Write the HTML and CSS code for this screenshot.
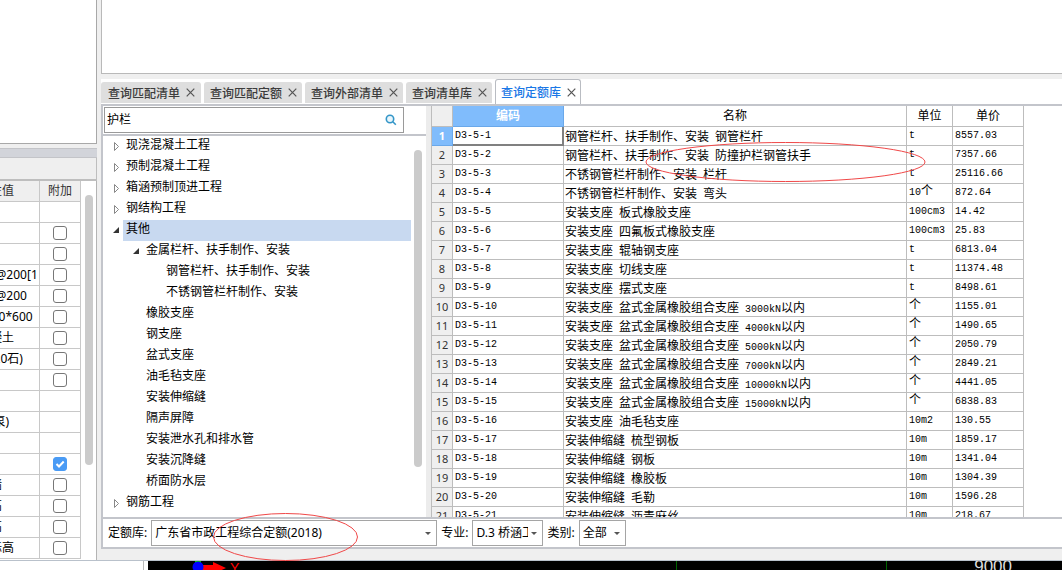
FILE: index.html
```html
<!DOCTYPE html>
<html lang="zh-CN">
<head>
<meta charset="utf-8">
<title>查询定额库</title>
<link rel="stylesheet" href="styles.css">
</head>
<body>
<main class="workspace">
  <aside class="props">
    <div class="props-view"></div>
    <div class="props-title"></div>
    <div class="props-tools"></div>
    <div class="props-body">
      <div class="props-clip">
      <table class="props-table">
        <thead><tr><th>属性值</th><th class="tick">附加</th></tr></thead>
        <tbody>
          <tr><td></td><td class="tick"></td></tr>
          <tr><td></td><td class="tick"><input type="checkbox" aria-label="附加"></td></tr>
          <tr><td></td><td class="tick"><input type="checkbox" aria-label="附加"></td></tr>
          <tr><td>C 8@200[1</td><td class="tick"><input type="checkbox" aria-label="附加"></td></tr>
          <tr><td>C 8@200</td><td class="tick"><input type="checkbox" aria-label="附加"></td></tr>
          <tr><td>1000*600</td><td class="tick"><input type="checkbox" aria-label="附加"></td></tr>
          <tr><td>混凝土</td><td class="tick"><input type="checkbox" aria-label="附加"></td></tr>
          <tr><td>(砾20石)</td><td class="tick"><input type="checkbox" aria-label="附加"></td></tr>
          <tr><td></td><td class="tick"><input type="checkbox" aria-label="附加"></td></tr>
          <tr><td></td><td class="tick"></td></tr>
          <tr><td>(水泵)</td><td class="tick"></td></tr>
          <tr><td></td><td class="tick"></td></tr>
          <tr><td></td><td class="tick"><input type="checkbox" aria-label="附加" checked></td></tr>
          <tr><td>直墙</td><td class="tick"><input type="checkbox" aria-label="附加"></td></tr>
          <tr><td>层高</td><td class="tick"><input type="checkbox" aria-label="附加"></td></tr>
          <tr><td>层高</td><td class="tick"><input type="checkbox" aria-label="附加"></td></tr>
          <tr><td>底标高</td><td class="tick"><input type="checkbox" aria-label="附加"></td></tr>
        </tbody>
      </table>
      </div>
      <div class="props-scroll"><div class="thumb"></div></div>
    </div>
  </aside>

  <section class="query">
    <div class="query-view"></div>
    <nav class="tabs">
      <div class="tab"><button class="tab-name">查询匹配清单</button><button class="close" aria-label="关闭"><svg viewBox="0 0 9 9"><path d="M.7.7l7.6 7.6M8.3.7L.7 8.3"/></svg></button></div>
      <div class="tab"><button class="tab-name">查询匹配定额</button><button class="close" aria-label="关闭"><svg viewBox="0 0 9 9"><path d="M.7.7l7.6 7.6M8.3.7L.7 8.3"/></svg></button></div>
      <div class="tab"><button class="tab-name">查询外部清单</button><button class="close" aria-label="关闭"><svg viewBox="0 0 9 9"><path d="M.7.7l7.6 7.6M8.3.7L.7 8.3"/></svg></button></div>
      <div class="tab"><button class="tab-name">查询清单库</button><button class="close" aria-label="关闭"><svg viewBox="0 0 9 9"><path d="M.7.7l7.6 7.6M8.3.7L.7 8.3"/></svg></button></div>
      <div class="tab active"><button class="tab-name">查询定额库</button><button class="close" aria-label="关闭"><svg viewBox="0 0 9 9"><path d="M.7.7l7.6 7.6M8.3.7L.7 8.3"/></svg></button></div>
    </nav>

    <div class="pane">
      <div class="split">
        <div class="nav">
          <div class="search-row">
            <div class="search">
              <input type="text" value="护栏" aria-label="搜索">
              <svg class="lens" viewBox="0 0 12 12"><circle cx="5" cy="5" r="3.7"/><path d="M7.8 7.8l3 3"/></svg>
            </div>
          </div>
          <div class="tree-area">
            <ul class="tree">
              <li class="l1"><i class="arrow"></i><span>现浇混凝土工程</span></li>
              <li class="l1"><i class="arrow"></i><span>预制混凝土工程</span></li>
              <li class="l1"><i class="arrow"></i><span>箱涵预制顶进工程</span></li>
              <li class="l1"><i class="arrow"></i><span>钢结构工程</span></li>
              <li class="l1 selected"><i class="arrow open"></i><span>其他</span></li>
              <li class="l2"><i class="arrow open"></i><span>金属栏杆、扶手制作、安装</span></li>
              <li class="l3"><i class="arrow none"></i><span>钢管栏杆、扶手制作、安装</span></li>
              <li class="l3"><i class="arrow none"></i><span>不锈钢管栏杆制作、安装</span></li>
              <li class="l2"><i class="arrow none"></i><span>橡胶支座</span></li>
              <li class="l2"><i class="arrow none"></i><span>钢支座</span></li>
              <li class="l2"><i class="arrow none"></i><span>盆式支座</span></li>
              <li class="l2"><i class="arrow none"></i><span>油毛毡支座</span></li>
              <li class="l2"><i class="arrow none"></i><span>安装伸缩缝</span></li>
              <li class="l2"><i class="arrow none"></i><span>隔声屏障</span></li>
              <li class="l2"><i class="arrow none"></i><span>安装泄水孔和排水管</span></li>
              <li class="l2"><i class="arrow none"></i><span>安装沉降缝</span></li>
              <li class="l2"><i class="arrow none"></i><span>桥面防水层</span></li>
              <li class="l1"><i class="arrow"></i><span>钢筋工程</span></li>
            </ul>
            <div class="tree-scroll"><div class="thumb"></div></div>
          </div>
        </div>
        <div class="grid-area">
          <table class="grid">
            <colgroup><col class="c-no"><col class="c-code"><col><col class="c-unit"><col class="c-price"></colgroup>
            <thead><tr><th></th><th class="on">编码</th><th>名称</th><th>单位</th><th>单价</th></tr></thead>
            <tbody>
              <tr><th class="on">1</th><td class="current">D3-5-1</td><td>钢管栏杆、扶手制作、安装<b> </b>钢管栏杆</td><td>t</td><td>8557.03</td></tr>
              <tr><th>2</th><td>D3-5-2</td><td>钢管栏杆、扶手制作、安装<b> </b>防撞护栏钢管扶手</td><td>t</td><td>7357.66</td></tr>
              <tr><th>3</th><td>D3-5-3</td><td>不锈钢管栏杆制作、安装<b> </b>栏杆</td><td>t</td><td>25116.66</td></tr>
              <tr><th>4</th><td>D3-5-4</td><td>不锈钢管栏杆制作、安装<b> </b>弯头</td><td>10<em>个</em></td><td>872.64</td></tr>
              <tr><th>5</th><td>D3-5-5</td><td>安装支座<b> </b>板式橡胶支座</td><td>100cm3</td><td>14.42</td></tr>
              <tr><th>6</th><td>D3-5-6</td><td>安装支座<b> </b>四氟板式橡胶支座</td><td>100cm3</td><td>25.83</td></tr>
              <tr><th>7</th><td>D3-5-7</td><td>安装支座<b> </b>辊轴钢支座</td><td>t</td><td>6813.04</td></tr>
              <tr><th>8</th><td>D3-5-8</td><td>安装支座<b> </b>切线支座</td><td>t</td><td>11374.48</td></tr>
              <tr><th>9</th><td>D3-5-9</td><td>安装支座<b> </b>摆式支座</td><td>t</td><td>8498.61</td></tr>
              <tr><th>10</th><td>D3-5-10</td><td>安装支座<b> </b>盆式金属橡胶组合支座<b> 3000kN</b>以内</td><td><em>个</em></td><td>1155.01</td></tr>
              <tr><th>11</th><td>D3-5-11</td><td>安装支座<b> </b>盆式金属橡胶组合支座<b> 4000kN</b>以内</td><td><em>个</em></td><td>1490.65</td></tr>
              <tr><th>12</th><td>D3-5-12</td><td>安装支座<b> </b>盆式金属橡胶组合支座<b> 5000kN</b>以内</td><td><em>个</em></td><td>2050.79</td></tr>
              <tr><th>13</th><td>D3-5-13</td><td>安装支座<b> </b>盆式金属橡胶组合支座<b> 7000kN</b>以内</td><td><em>个</em></td><td>2849.21</td></tr>
              <tr><th>14</th><td>D3-5-14</td><td>安装支座<b> </b>盆式金属橡胶组合支座<b> 10000kN</b>以内</td><td><em>个</em></td><td>4441.05</td></tr>
              <tr><th>15</th><td>D3-5-15</td><td>安装支座<b> </b>盆式金属橡胶组合支座<b> 15000kN</b>以内</td><td><em>个</em></td><td>6838.83</td></tr>
              <tr><th>16</th><td>D3-5-16</td><td>安装支座<b> </b>油毛毡支座</td><td>10m2</td><td>130.55</td></tr>
              <tr><th>17</th><td>D3-5-17</td><td>安装伸缩缝<b> </b>梳型钢板</td><td>10m</td><td>1859.17</td></tr>
              <tr><th>18</th><td>D3-5-18</td><td>安装伸缩缝<b> </b>钢板</td><td>10m</td><td>1341.04</td></tr>
              <tr><th>19</th><td>D3-5-19</td><td>安装伸缩缝<b> </b>橡胶板</td><td>10m</td><td>1304.39</td></tr>
              <tr><th>20</th><td>D3-5-20</td><td>安装伸缩缝<b> </b>毛勒</td><td>10m</td><td>1596.28</td></tr>
              <tr><th>21</th><td>D3-5-21</td><td>安装伸缩缝<b> </b>沥青麻丝</td><td>10m</td><td>218.67</td></tr>
            </tbody>
          </table>
        </div>
      </div>
      <form class="filters">
        <label for="lib">定额库:</label>
        <div class="pick pick-lib"><select id="lib"><option>广东省市政工程综合定额(2018)</option></select></div>
        <label for="major">专业:</label>
        <div class="pick pick-major"><select id="major"><option>D.3 桥涵工程</option></select></div>
        <label for="kind">类别:</label>
        <div class="pick pick-kind"><select id="kind"><option>全部</option></select></div>
      </form>
    </div>
  </section>
</main>

<footer class="strip">
  <div class="strip-left"></div>
  <div class="drawing">
    <svg class="axis" viewBox="0 0 100 9"><path d="M47 0h6v4h-6z" fill="#00d000"/><path d="M52 4h13V1l13 6-13 6V9H52z" fill="red"/><circle cx="50" cy="6" r="5.5" fill="#00f"/></svg>
    <span class="axis-name">Y</span>
    <span class="dim">9000</span>
  </div>
</footer>

<svg class="mark mark-row" viewBox="0 0 281 42" aria-hidden="true"><ellipse cx="140.5" cy="21" rx="139.5" ry="19.5"/></svg>
<svg class="mark mark-lib" viewBox="0 0 147 50" aria-hidden="true"><ellipse cx="73.5" cy="25" rx="72" ry="23.5"/></svg>
</body>
</html>
```

FILE: styles.css
```css
* { box-sizing: border-box; }

body {
  margin: 0;
  height: 100vh;
  display: flex;
  flex-direction: column;
  overflow: hidden;
  background: #efefef;
  color: #000;
  font: 12px/20px "Noto Sans", "Noto Sans CJK SC", sans-serif;
}

button, input, select { font: inherit; color: inherit; }

.workspace {
  flex: 1;
  min-height: 0;
  display: flex;
  gap: 4px;
  border-bottom: 1px solid #b9c1cb;
}

/* property panel */
.props {
  width: 97px;
  flex: none;
  display: flex;
  flex-direction: column;
}
.props-view {
  height: 144px;
  flex: none;
  background: #fff;
  border: solid #a8a8a8;
  border-width: 0 1px 1px 0;
}
.props-title {
  height: 10px;
  flex: none;
  margin-top: 4px;
  background: #d2d4da;
  border: solid #c3c4c8;
  border-width: 1px 0;
}
.props-tools {
  height: 23px;
  flex: none;
  border: solid #bebebe;
  border-width: 0 1px 2px 0;
}
.props-body {
  flex: 1;
  min-height: 0;
  display: flex;
  background: #fff;
  border-right: 1px solid #b4b4b4;
}
.props-clip { width: 81px; overflow: hidden; }
.props-table {
  width: 105px;
  margin-left: -24px;
  table-layout: fixed;
  border-collapse: separate;
  border-spacing: 0;
}
.props-table th, .props-table td {
  height: 21px;
  padding: 0 0 0 2px;
  border: solid #c8c8c8;
  border-width: 0 1px 1px 0;
  line-height: 20px;
  font-weight: 400;
  text-align: left;
  white-space: nowrap;
}
.props-table th { background: #efefef; color: #333; }
.props-table .tick { width: 41px; padding: 0; text-align: center; }
.props-table input {
  appearance: none;
  display: block;
  width: 14px;
  height: 14px;
  margin: 0 auto;
  background: #fff;
  border: 1px solid #777;
  border-radius: 3px;
}
.props-table input:checked {
  border-color: #4a9bf5;
  background: #4a9bf5 url("data:image/svg+xml,%3Csvg xmlns='http://www.w3.org/2000/svg' viewBox='0 0 12 12'%3E%3Cpath d='M2.5 6l2.5 2.5 4.7-5' fill='none' stroke='white' stroke-width='2'/%3E%3C/svg%3E");
}
.props-scroll { flex: 1; padding: 14px 3px 0 4px; }
.thumb { border-radius: 4px; background: #cbcbcb; }
.props-scroll .thumb { height: 270px; }

/* query panel */
.query {
  flex: 1;
  min-width: 0;
  display: flex;
  flex-direction: column;
  padding-bottom: 11px;
}
.query-view {
  height: 74px;
  flex: none;
  background: #fff;
  border: solid #b9b9b9;
  border-width: 0 0 1px 1px;
}
.tabs {
  height: 25px;
  flex: none;
  margin-top: 5px;
  display: flex;
  align-items: flex-end;
  gap: 3px;
  background: #fff;
}
.tab {
  height: 21px;
  margin-bottom: 1px;
  padding: 0 5px 0 6px;
  display: flex;
  align-items: center;
  gap: 6px;
  border-radius: 3px 3px 0 0;
  background: #dedede;
  color: #3c3c3c;
  font-weight: 500;
}
.tab:first-child { padding: 0 6px 0 7px; }
.tab.active {
  height: 25px;
  margin: 0;
  padding: 0 4px 0 5px;
  border: 1px solid #b9bcc2;
  border-bottom: 0;
  background: #fff;
  color: #1a78e6;
}
.tab button { padding: 0; border: 0; background: none; }
.tab-name { line-height: 20px; font-family: "Noto Sans CJK SC", sans-serif; }
.close { width: 9px; height: 9px; display: flex; }
.close svg { width: 9px; height: 9px; fill: none; stroke: #555; stroke-width: 1.2; }

.pane {
  flex: 1;
  min-height: 0;
  display: flex;
  flex-direction: column;
  background: #fff;
  border: solid #c3c5cb;
  border-width: 2px 0 2px 2px;
}
.split { flex: 1; min-height: 0; display: flex; }
.nav {
  width: 323px;
  flex: none;
  display: flex;
  flex-direction: column;
}
.search-row {
  flex: none;
  height: 30px;
  padding: 1px 22px 2px 1px;
  border-bottom: 2px solid #c3c5cb;
}
.search {
  height: 26px;
  display: flex;
  align-items: center;
  padding-right: 6px;
  border: 1px solid #9a9a9a;
}
.search input {
  flex: 1;
  min-width: 0;
  padding: 0 2px;
  border: 0;
  outline: 0;
  background: none;
}
.lens { width: 12px; height: 12px; fill: #e9f6fc; stroke: #3496c8; stroke-width: 1.6; }

.tree-area { flex: 1; min-height: 0; display: flex; overflow: hidden; }
.tree { flex: 1; margin: 0; padding: 0; list-style: none; }
.tree li { display: flex; height: 21px; line-height: 18px; }
.tree span { flex: 1; padding-left: 3px; }
.tree .selected span { background: #c8d9f0; }
.l1 { padding-left: 10px; }
.l2 { padding-left: 30px; }
.l3 { padding-left: 50px; }
.arrow {
  width: 10px;
  height: 21px;
  background: url("data:image/svg+xml,%3Csvg xmlns='http://www.w3.org/2000/svg' viewBox='0 0 10 21'%3E%3Cpath d='M1.5 6.5v8l4-4z' fill='white' stroke='%23888'/%3E%3C/svg%3E");
}
.arrow.open {
  background: url("data:image/svg+xml,%3Csvg xmlns='http://www.w3.org/2000/svg' viewBox='0 0 10 21'%3E%3Cpath d='M6 7v6H0z' fill='%23333'/%3E%3C/svg%3E");
}
.arrow.none { background: none; }
.tree-scroll { width: 14px; flex: none; padding: 14px 3px 0; margin-right: 1px; }
.tree-scroll .thumb { height: 317px; }

.grid-area {
  flex: 1;
  min-width: 0;
  overflow: hidden;
  padding-right: 38px;
  border-left: 5px solid #ececec;
}
.grid {
  width: 100%;
  table-layout: fixed;
  border-collapse: separate;
  border-spacing: 0;
  border-left: 1px solid #bdbdbd;
}
.c-no { width: 21px; }
.c-code { width: 111px; }
.c-unit { width: 46px; }
.c-price { width: 71px; }
.grid th, .grid td {
  height: 19px;
  padding: 0 2px;
  border: solid #bdbdbd;
  border-width: 0 1px 1px 0;
  line-height: 18px;
  font-weight: 400;
  text-align: left;
  white-space: nowrap;
}
.grid td { font-family: "Liberation Mono", "Noto Sans CJK SC", monospace; font-size: 10px; }
.grid td:nth-child(3), .grid em { font-family: "Noto Sans CJK SC", sans-serif; font-size: 12px; font-style: normal; }
.grid td:nth-child(3) { padding-left: 1px; line-height: 16px; }
.grid em { line-height: 10px; }
.grid b { font: 10px/10px "Liberation Mono", monospace; }
.grid thead th { height: 21px; line-height: 20px; text-align: center; }
.grid th:first-child { padding: 0; background: #efefef; color: #333; font-size: 11px; text-align: center; }
.grid thead th.on, .grid tbody th.on {
  background: #80bcfc;
  border-color: #6aa8ea;
  color: #fff;
  font-weight: 700;
}
.grid .current { box-shadow: inset -1px -1px #808080; border-color: #808080; }

.filters {
  height: 30px;
  flex: none;
  display: flex;
  align-items: center;
  padding-left: 5px;
  border-top: 2px solid #c3c5cb;
}
.pick {
  position: relative;
  height: 26px;
  margin: 0 4px;
  border: 1px solid #a5a5a5;
}
.pick select {
  appearance: none;
  width: 100%;
  height: 24px;
  padding: 0 14px 0 3px;
  border: 0;
  outline: 0;
  background: none;
  white-space: nowrap;
  overflow: hidden;
}
.pick::after {
  content: "";
  position: absolute;
  right: 5px;
  top: 11px;
  border: 3px solid transparent;
  border-top-color: #555;
  border-bottom: 0;
}
.pick-lib { width: 286px; }
.pick-major { width: 71px; }
.pick-kind { width: 47px; }

/* drawing window under the panels */
.strip { flex: none; height: 9px; display: flex; overflow: hidden; background: #fff; }
.strip-left { width: 144px; flex: none; margin-right: 4px; border-right: 1px solid #bbb; }
.drawing {
  flex: 1;
  display: flex;
  align-items: flex-start;
  overflow: hidden;
  padding-right: 50px;
  background:
    linear-gradient(#006400, #006400) 528px 0 / 1px 100% no-repeat,
    linear-gradient(#006400, #006400) 738px 0 / 1px 100% no-repeat,
    #000;
}
.axis { width: 100px; height: 9px; margin-right: -18px; flex: none; }
.axis-name { color: red; font: 14px/14px "Liberation Sans", sans-serif; }
.dim { margin-left: auto; color: #ddd; font: 17px/12px "Liberation Sans", sans-serif; }

/* hand-drawn review marks */
.mark { position: absolute; fill: none; stroke: #f04848; stroke-width: 1; pointer-events: none; }
.mark-row { left: 645px; top: 141px; width: 281px; height: 42px; }
.mark-lib { left: 212px; top: 512px; width: 147px; height: 50px; }
```
